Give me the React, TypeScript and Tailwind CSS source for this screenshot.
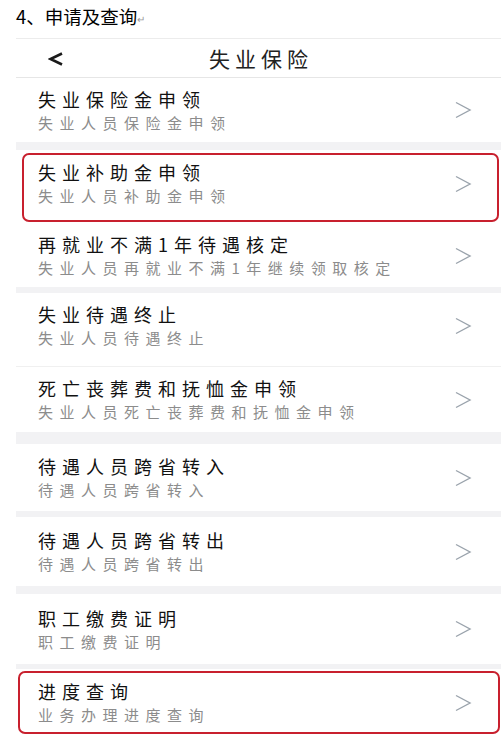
import React from 'react';

type Item = {
  title: string;
  sub: string;
};

const font = { fontFamily: '"Noto Sans CJK SC", "Noto Sans", sans-serif' };

function Chevron() {
  return (
    <svg width="18" height="18" viewBox="0 0 18 18" fill="none" className="shrink-0">
      <polyline points="2,1.5 16,9 2,16.5" stroke="#9aa3ac" strokeWidth="1.4" strokeLinejoin="miter" />
    </svg>
  );
}

function Row({ item, className }: { item: Item; className: string }) {
  return (
    <div className={`flex items-center justify-between ${className}`}>
      <div className="flex flex-col gap-[3px]">
        <p className="text-[18px] leading-[22px] tracking-[6px] text-[#111] whitespace-nowrap">{item.title}</p>
        <p className="text-[15px] leading-[20px] tracking-[6.5px] text-[#8c8c8c] whitespace-nowrap">{item.sub}</p>
      </div>
      <Chevron />
    </div>
  );
}

function Gap({ h }: { h: string }) {
  return <div className={`${h} bg-[#f2f2f4]`} />;
}

export default function App() {
  return (
    <div className="w-[501px] h-[743px] bg-white overflow-hidden" style={font}>
      {/* document heading */}
      <div className="h-[38px] pl-[16px] pt-[4px] flex items-start">
        <span className="text-[18.5px] leading-[24px] text-black">4、申请及查询</span>
        <span className="text-[10px] leading-[24px] text-[#9a9a9a] mt-[3px]">↵</span>
      </div>

      {/* phone screenshot */}
      <div className="ml-[16px] border-t border-[#ececec]">
        {/* nav */}
        <div className="relative h-[39px] border-b border-[#e6e6e6] flex items-center justify-center">
          <svg width="16" height="14" viewBox="0 0 16 14" fill="none" className="absolute left-[32px] top-[13px]">
            <polyline points="14,1.5 2.5,7 14,12.5" stroke="#1a1a1a" strokeWidth="2.6" strokeLinejoin="miter" />
          </svg>
          <span className="text-[21px] leading-[26px] tracking-[5px] text-[#222] pl-[5px]">失业保险</span>
        </div>

        <Row item={{ title: '失业保险金申领', sub: '失业人员保险金申领' }} className="h-[64px] pl-[22px] pr-[29px]" />
        <Gap h="h-[8px]" />

        <div className="pt-[3px] pb-[2px] pl-[6px] pr-[2px]">
          <Row
            item={{ title: '失业补助金申领', sub: '失业人员补助金申领' }}
            className="h-[69px] border-2 border-[#c8202e] rounded-[7px] pl-[14px] pr-[25px] pb-[8px]"
          />
        </div>

        <Row item={{ title: '再就业不满1年待遇核定', sub: '失业人员再就业不满1年继续领取核定' }} className="h-[63px] pl-[22px] pr-[29px]" />
        <Gap h="h-[6px]" />

        <Row item={{ title: '失业待遇终止', sub: '失业人员待遇终止' }} className="h-[74px] pl-[22px] pr-[29px] pb-[8px] border-b border-[#f0f0f0]" />
        <Row item={{ title: '死亡丧葬费和抚恤金申领', sub: '失业人员死亡丧葬费和抚恤金申领' }} className="h-[65px] pl-[22px] pr-[29px]" />
        <Gap h="h-[12px]" />

        <Row item={{ title: '待遇人员跨省转入', sub: '待遇人员跨省转入' }} className="h-[67px] pl-[22px] pr-[29px]" />
        <Gap h="h-[6px]" />

        <Row item={{ title: '待遇人员跨省转出', sub: '待遇人员跨省转出' }} className="h-[69px] pl-[22px] pr-[29px]" />
        <Gap h="h-[8px]" />

        <Row item={{ title: '职工缴费证明', sub: '职工缴费证明' }} className="h-[70px] pl-[22px] pr-[29px]" />
        <Gap h="h-[5px]" />

        <div className="pt-[2px] pl-[2px] pr-[1px]">
          <Row
            item={{ title: '进度查询', sub: '业务办理进度查询' }}
            className="h-[63px] border-2 border-[#c8202e] rounded-[7px] pl-[18px] pr-[26px]"
          />
        </div>
      </div>
    </div>
  );
}
